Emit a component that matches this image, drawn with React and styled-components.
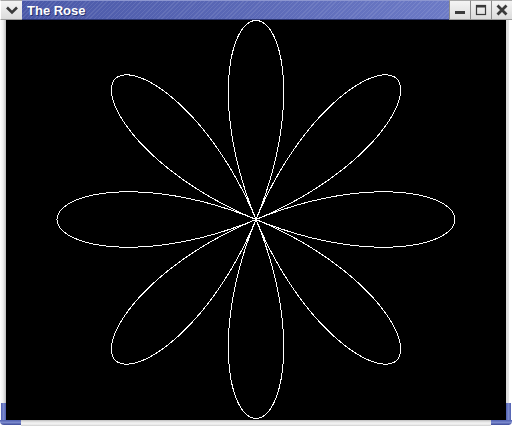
import React from "react";
import styled, { createGlobalStyle } from "styled-components";

const Global = createGlobalStyle`
  html, body { margin: 0; padding: 0; background: #ffffff; }
  body { width: 512px; height: 426px; overflow: hidden; font-family: "DejaVu Sans", sans-serif; }
`;

const Window = styled.div`
  width: 512px;
  height: 426px;
  display: flex;
  flex-direction: column;
  background: #ffffff;
`;

const TitleRow = styled.div`
  height: 20px;
  display: flex;
  flex-direction: row;
`;

const FrameButton = styled.div`
  width: ${(p) => p.$w || 21}px;
  height: 20px;
  box-sizing: border-box;
  background: linear-gradient(#f4f4f4, #dcdcdc);
  border-top: 1px solid #a8a8a8;
  border-left: 1px solid ${(p) => (p.$first ? "#ffffff" : "#8c8c8c")};
  border-bottom: 1px solid #9c9c9c;
  display: flex;
  align-items: center;
  justify-content: center;
`;

const TitleBar = styled.div`
  flex: 1;
  height: 20px;
  box-sizing: border-box;
  border-top: 1px solid #8c96d0;
  border-bottom: 1px solid #2a3470;
  background:
    repeating-linear-gradient(
      135deg,
      rgba(255, 255, 255, 0.09) 0px,
      rgba(255, 255, 255, 0.09) 1px,
      rgba(255, 255, 255, 0) 1px,
      rgba(255, 255, 255, 0) 3px
    ),
    linear-gradient(90deg, #4a58a8 0%, #5a68b6 50%, #6c7ac6 100%);
  display: flex;
  align-items: center;
  padding-left: 5px;
`;

const Title = styled.span`
  color: #ffffff;
  font-family: "Liberation Sans", Arial, sans-serif;
  font-weight: bold;
  font-size: 13px;
  line-height: 1;
  text-shadow: 1px 1px 0 #26306a;
`;

const Body = styled.div`
  flex: 1;
  display: flex;
  flex-direction: row;
`;

const SideBorder = styled.div`
  width: 6px;
  display: flex;
  flex-direction: column;
  box-sizing: border-box;
  background: ${(p) =>
    p.$right
      ? "linear-gradient(90deg, #dadada 0px, #e8e8e8 3px, #ffffff 3px)"
      : "linear-gradient(90deg, #ffffff 0px, #f0f0f0 3px, #d0d0d0 5px, #bcbcbc 6px)"};
  justify-content: flex-end;
`;

const CornerV = styled.div`
  height: 17px;
  margin: ${(p) => (p.$right ? "0 1px 0 0" : "0 0 0 1px")};
  background: linear-gradient(90deg, #5060b0, #7a88cc, #5060b0);
`;

const Canvas = styled.div`
  flex: 1;
  background: #000000;
  position: relative;
  overflow: hidden;
`;

const BottomRow = styled.div`
  height: 6px;
  display: flex;
  flex-direction: row;
`;

const BottomStrip = styled.div`
  flex: 1;
  background: linear-gradient(#bcbcbc 0px, #e8e8e8 2px, #f4f4f4 4px, #cfcfcf 6px);
`;

const CornerH = styled.div`
  width: 21px;
  background: linear-gradient(#5060b0, #7a88cc 50%, #3c4a98);
  border-radius: ${(p) => (p.$right ? "0 0 4px 0" : "0 0 0 4px")};
  margin-bottom: 1px;
`;

function rosePoints() {
  const cx = 250;
  const cy = 199.5;
  const R = 199;
  const pts = [];
  const N = 2400;
  for (let i = 0; i <= N; i++) {
    const t = (i / N) * Math.PI * 2;
    const r = R * Math.cos(4 * t);
    const x = cx + r * Math.cos(t);
    const y = cy - r * Math.sin(t);
    pts.push(x.toFixed(2) + "," + y.toFixed(2));
  }
  return pts.join(" ");
}

const Rose = () => (
  <svg width="500" height="400" viewBox="0 0 500 400" style={{ display: "block" }}>
    <polyline
      points={rosePoints()}
      fill="none"
      stroke="#ffffff"
      strokeWidth="1"
      shapeRendering="crispEdges"
    />
  </svg>
);

const IconChevron = () => (
  <svg width="12" height="9" viewBox="0 0 12 9">
    <path d="M1 1.5 L6 6.5 L11 1.5" fill="none" stroke="#3a3a3a" strokeWidth="2.6" />
  </svg>
);

const IconMin = () => (
  <svg width="12" height="12" viewBox="0 0 12 12">
    <rect x="1" y="7" width="10" height="3" fill="#3a3a3a" />
  </svg>
);

const IconMax = () => (
  <svg width="12" height="12" viewBox="0 0 12 12">
    <rect x="1.5" y="1.5" width="9" height="9" fill="none" stroke="#3a3a3a" strokeWidth="1.2" />
    <rect x="1" y="1" width="10" height="2.5" fill="#3a3a3a" />
  </svg>
);

const IconClose = () => (
  <svg width="12" height="12" viewBox="0 0 12 12">
    <path d="M1.5 1.5 L10.5 10.5 M10.5 1.5 L1.5 10.5" stroke="#3a3a3a" strokeWidth="2.8" />
  </svg>
);

export default function App() {
  return (
    <>
      <Global />
      <Window>
        <TitleRow>
          <FrameButton $first $w={22}>
            <IconChevron />
          </FrameButton>
          <TitleBar>
            <Title>The Rose</Title>
          </TitleBar>
          <FrameButton>
            <IconMin />
          </FrameButton>
          <FrameButton>
            <IconMax />
          </FrameButton>
          <FrameButton>
            <IconClose />
          </FrameButton>
        </TitleRow>
        <Body>
          <SideBorder>
            <CornerV />
          </SideBorder>
          <Canvas>
            <Rose />
          </Canvas>
          <SideBorder $right>
            <CornerV $right />
          </SideBorder>
        </Body>
        <BottomRow>
          <CornerH />
          <BottomStrip />
          <CornerH $right />
        </BottomRow>
      </Window>
    </>
  );
}
